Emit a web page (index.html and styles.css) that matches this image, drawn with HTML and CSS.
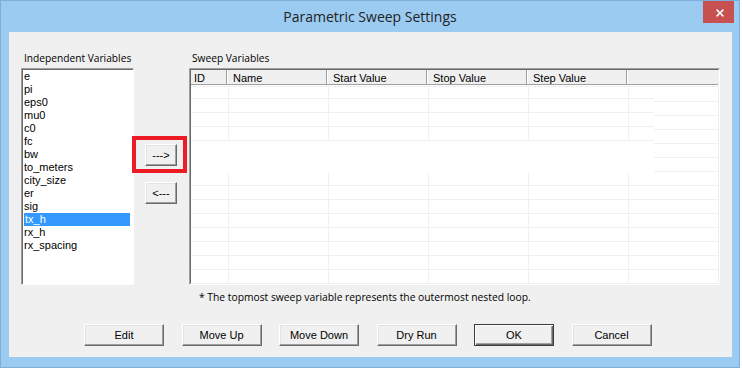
FILE: index.html
```html
<!DOCTYPE html>
<html lang="en">
<head>
    <meta charset="UTF-8">
    <meta name="viewport" content="width=device-width, initial-scale=1.0">
    <title>Parametric Sweep Settings</title>
    <link rel="stylesheet" href="styles.css">
</head>
<body>

    <div class="window">
        <div class="titlebar">
            <span class="title">Parametric Sweep Settings</span>
            <button class="close" title="Close">
                <svg width="8" height="8" viewBox="0 0 8 8"><path d="M0.6 0.6L7.4 7.4M7.4 0.6L0.6 7.4" stroke="#fff" stroke-width="1.5"/></svg>
            </button>
        </div>

        <div class="panel">
            <div class="top">
                <div class="indep">
                    <div class="label">Independent Variables</div>
                    <ul class="listbox">
                        <li>e</li>
                        <li>pi</li>
                        <li>eps0</li>
                        <li>mu0</li>
                        <li>c0</li>
                        <li>fc</li>
                        <li>bw</li>
                        <li>to_meters</li>
                        <li>city_size</li>
                        <li>er</li>
                        <li>sig</li>
                        <li class="selected">tx_h</li>
                        <li>rx_h</li>
                        <li>rx_spacing</li>
                    </ul>
                </div>

                <div class="mover">
                    <div class="arrow-wrap">
                        <button class="btn small">---&gt;</button>
                        <div class="callout"></div>
                    </div>
                    <button class="btn small back">&lt;---</button>
                </div>

                <div class="sweep">
                    <div class="label">Sweep Variables</div>
                    <div class="listview">
                        <div class="lv-frame">
                            <div class="lv-head">
                                <div class="col c-id">ID</div>
                                <div class="col">Name</div>
                                <div class="col">Start Value</div>
                                <div class="col">Stop Value</div>
                                <div class="col">Step Value</div>
                                <div class="col last"></div>
                            </div>
                            <div class="lv-body">
                                <div class="row"><span></span><span></span><span></span><span></span><span></span><span></span></div>
                                <div class="row"><span></span><span></span><span></span><span></span><span></span><span></span></div>
                                <div class="row"><span></span><span></span><span></span><span></span><span></span><span></span></div>
                                <div class="row"><span></span><span></span><span></span><span></span><span></span><span></span></div>
                                <div class="row"><span></span><span></span><span></span><span></span><span></span><span></span></div>
                                <div class="row"><span></span><span></span><span></span><span></span><span></span><span></span></div>
                                <div class="row"><span></span><span></span><span></span><span></span><span></span><span></span></div>
                                <div class="row"><span></span><span></span><span></span><span></span><span></span><span></span></div>
                                <div class="row"><span></span><span></span><span></span><span></span><span></span><span></span></div>
                                <div class="row"><span></span><span></span><span></span><span></span><span></span><span></span></div>
                                <div class="row"><span></span><span></span><span></span><span></span><span></span><span></span></div>
                                <div class="row"><span></span><span></span><span></span><span></span><span></span><span></span></div>
                                <div class="row"><span></span><span></span><span></span><span></span><span></span><span></span></div>
                                <div class="row"><span></span><span></span><span></span><span></span><span></span><span></span></div>

                                <!-- stale repaint area left over in the grid -->
                                <div class="stale">
                                    <div class="stale-rows">
                                        <div class="row"><span></span><span></span><span></span><span></span><span></span><span></span></div>
                                        <div class="row"><span></span><span></span><span></span><span></span><span></span><span></span></div>
                                        <div class="row"><span></span><span></span><span></span><span></span><span></span><span></span></div>
                                        <div class="row"><span></span><span></span><span></span><span></span><span></span><span></span></div>
                                    </div>
                                </div>
                            </div>
                        </div>
                    </div>
                </div>
            </div>

            <p class="note">* The topmost sweep variable represents the outermost nested loop.</p>

            <div class="actions">
                <button class="btn">Edit</button>
                <button class="btn">Move Up</button>
                <button class="btn">Move Down</button>
                <button class="btn">Dry Run</button>
                <button class="btn default">OK</button>
                <button class="btn">Cancel</button>
            </div>
        </div>
    </div>

</body>
</html>
```

FILE: styles.css
```css
body {
    margin: 0;
    background-color: #fff;
    font-family: "Liberation Sans", Arial, sans-serif;
    font-size: 11px;
    color: #000;
}
.window {
    width: 740px;
    height: 368px;
    box-sizing: border-box;
    border: 1px solid #7fadd9;
    background-color: #9ccbf2;
}
.titlebar {
    height: 31px;
    display: grid;
    grid-template-columns: 1fr auto 1fr;
}
.title {
    grid-column: 2;
    font-family: "Open Sans", sans-serif;
    font-size: 14px;
    line-height: 32px;
    color: #222;
}
.close {
    grid-column: 3;
    justify-self: end;
    width: 31px;
    height: 22px;
    margin-right: 5px;
    padding: 2px 0 0 3px;
    border: none;
    background-color: #c75050;
    display: flex;
    align-items: center;
    justify-content: center;
}
.panel {
    margin-left: 8px;
    width: 723px;
    height: 325px;
    box-sizing: border-box;
    padding: 18px 0 0 12px;
    background-color: #f0f0f0;
}
.top {
    display: flex;
    align-items: flex-start;
}
.label {
    height: 16px;
    line-height: 16px;
    margin-bottom: 2px;
    padding-left: 3px;
    font-family: "Open Sans", sans-serif;
    font-size: 10.2px;
    color: #000;
}
.indep {
    width: 113px;
}
.listbox {
    list-style: none;
    margin: 0;
    padding: 1px 0 0 1px;
    height: 217px;
    box-sizing: border-box;
    border: 1px solid;
    border-color: #a0a0a0 #fff #fff #a0a0a0;
    box-shadow: inset 1px 1px 0 #696969;
    background-color: #fff;
}
.listbox li {
    height: 13px;
    line-height: 13px;
    padding-left: 1px;
}
.listbox li.selected {
    width: 106px;
    margin-left: 1px;
    box-sizing: border-box;
    background-color: #3399ff;
    color: #fff;
}
.mover {
    margin-left: 11px;
    width: 32px;
    padding-top: 94px;
}
.arrow-wrap {
    position: relative;
    height: 22px;
}
.callout {
    position: absolute;
    left: -13px;
    top: -8px;
    width: 55px;
    height: 37px;
    box-sizing: border-box;
    border: 4px solid #ed1c24;
}
.btn {
    width: 80px;
    height: 22px;
    padding: 0;
    box-sizing: border-box;
    border: 1px solid;
    border-color: #fff #696969 #696969 #fff;
    box-shadow: inset -1px -1px 0 #a0a0a0, inset 1px 1px 0 #e3e3e3;
    background-color: #f0f0f0;
    font-family: "Liberation Sans", Arial, sans-serif;
    font-size: 11px;
    color: #000;
}
.btn.small {
    width: 32px;
    display: block;
}
.btn.back {
    margin-top: 16px;
}
.btn.default {
    border-color: #3c3c3c;
    box-shadow: inset 1px 1px 0 #fff, inset -1px -1px 0 #696969, inset -2px -2px 0 #a0a0a0;
}
.sweep {
    margin-left: 12px;
}
.listview {
    width: 531px;
    height: 217px;
    box-sizing: border-box;
    border: 1px solid;
    border-color: #a0a0a0 #fff #fff #a0a0a0;
}
.lv-frame {
    height: 100%;
    box-sizing: border-box;
    border: 1px solid;
    border-color: #696969 #f0f0f0 #f0f0f0 #696969;
    background-color: #fff;
    overflow: hidden;
}
.lv-head {
    display: flex;
    height: 14px;
    line-height: 16px;
    border-bottom: 1px solid #a0a0a0;
    background-color: #f0f0f0;
    white-space: nowrap;
    overflow: hidden;
}
.col {
    width: 100px;
    flex-shrink: 0;
    box-sizing: border-box;
    padding-left: 5px;
    border-right: 1px solid #fff;
    box-shadow: inset -1px 0 0 #a0a0a0;
}
.col.c-id {
    width: 37px;
    padding-left: 3px;
}
.col.last {
    flex: 1;
    border-right: none;
    box-shadow: none;
}
.lv-body {
    position: relative;
    padding-top: 1px;
}
.lv-body::before {
    content: "";
    display: block;
    height: 1px;
    margin-bottom: 1px;
    background-color: #f0f0f0;
}
.row {
    display: flex;
    height: 14px;
    box-sizing: border-box;
    border-bottom: 1px solid #f0f0f0;
}
.row span {
    width: 100px;
    flex-shrink: 0;
    box-sizing: border-box;
    border-right: 1px solid #f0f0f0;
}
.row span:first-child {
    width: 38px;
}
.row span:last-child {
    flex: 1;
    border-right: none;
}
.stale {
    position: absolute;
    top: 2px;
    left: 0;
    width: 463px;
    height: 86px;
    overflow: hidden;
    background-color: #fff;
}
.stale-rows {
    margin-top: -2px;
}
.note {
    margin: 5px 0 0;
    padding-left: 178px;
    height: 14px;
    line-height: 14px;
    font-family: "Open Sans", sans-serif;
    font-size: 10.3px;
}
.actions {
    display: flex;
    gap: 17.5px;
    margin-top: 20px;
    padding-left: 63px;
}
```
